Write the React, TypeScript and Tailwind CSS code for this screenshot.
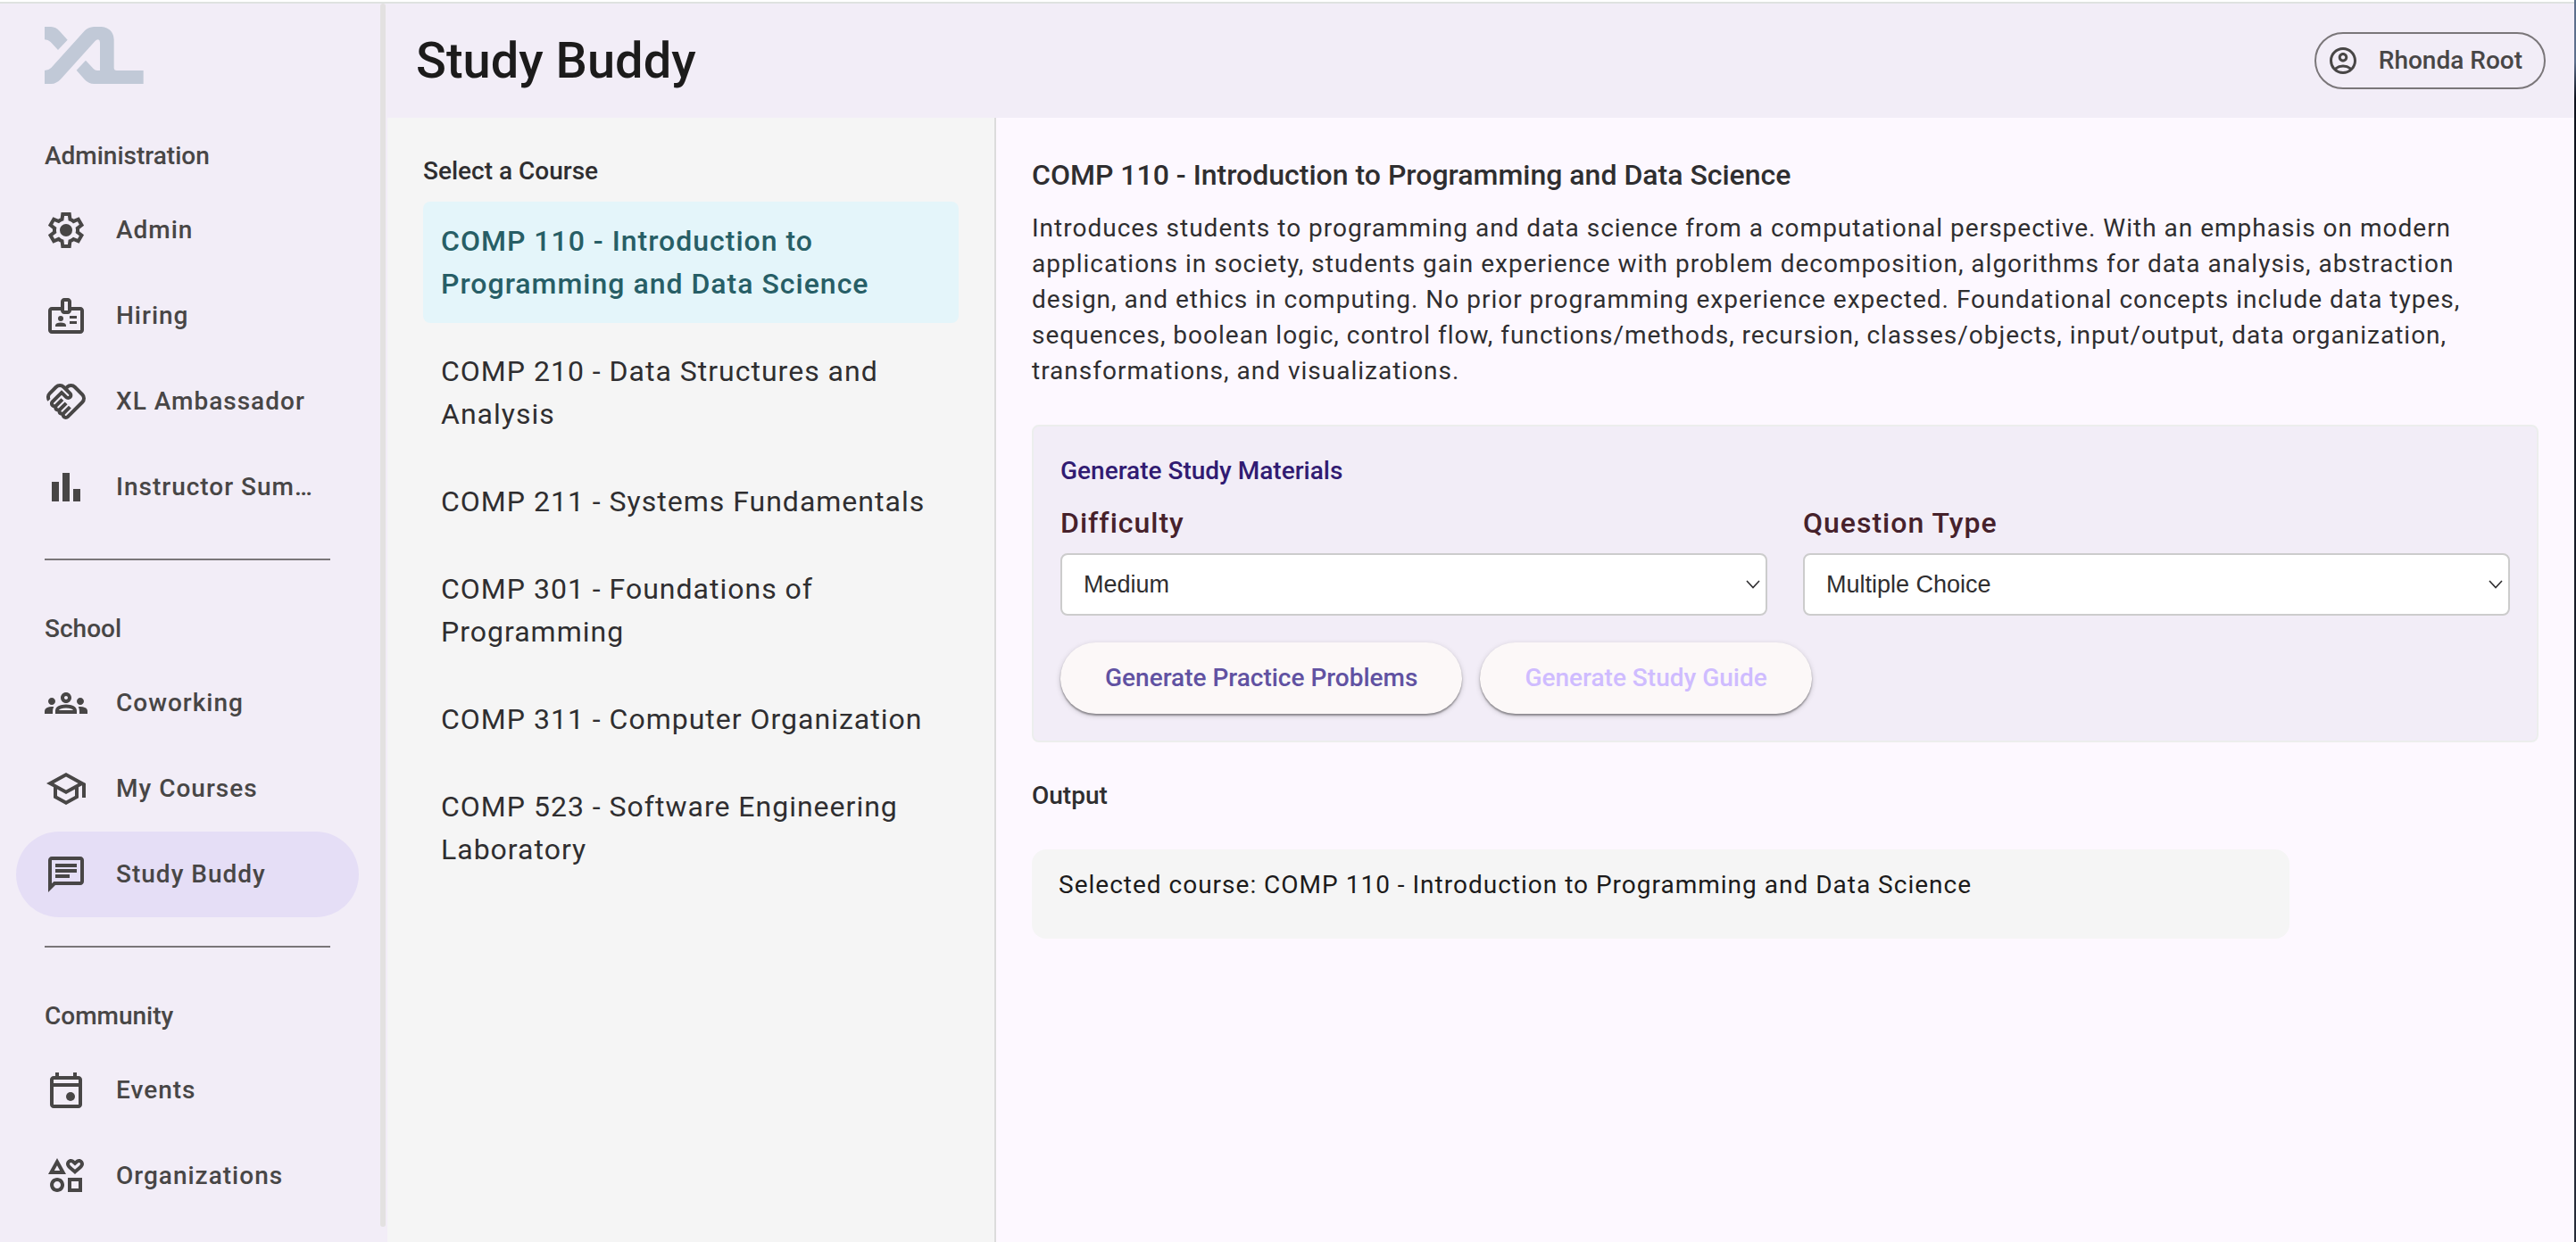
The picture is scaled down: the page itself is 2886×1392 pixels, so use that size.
import { useState, type ComponentType, type ReactNode } from "react";
import {
  MdBarChart,
  MdOutlineAccountCircle,
  MdOutlineBadge,
  MdOutlineChat,
  MdOutlineGroups,
  MdOutlineHandshake,
  MdOutlineInterests,
  MdOutlineSchool,
} from "react-icons/md";

type IconProps = { className?: string };

function Logo() {
  return (
    <svg viewBox="150 90 333 192" className="h-16 w-[111px]" fill="#c1c9d7" role="img" aria-label="XL">
      <path d="M150 90H172Q188 91 200 104L227 134L195 168L170 141Q162 133 150 133Z" />
      <path d="M150 282H172Q190 281 204 266L319 139Q324 133 330 133Q336 134 336 143V237H327Q319 237 314 231L288 203L257 236L284 267Q298 282 316 282H482V237H392Q383 237 383 228V133Q380 94 342 90H315Q297 91 285 103L172 228Q163 237 150 237Z" />
    </svg>
  );
}

function GearIcon({ className }: IconProps) {
  return (
    <svg viewBox="0 0 24 24" fill="currentColor" className={className} aria-hidden="true">
      <path
        fillRule="evenodd"
        d="m9.25 22l-.4-3.2q-.325-.125-.612-.3t-.563-.375L4.7 19.375l-2.75-4.75l2.575-1.95Q4.5 12.5 4.5 12.338v-.675q0-.163.025-.338L1.95 9.375l2.75-4.75l2.975 1.25q.275-.2.575-.375t.6-.3l.4-3.2h5.5l.4 3.2q.325.125.613.3t.562.375l2.975-1.25l2.75 4.75l-2.575 1.95q.025.175.025.338v.674q0 .163-.05.338l2.575 1.95l-2.75 4.75l-2.95-1.25q-.275.2-.575.375t-.6.3l-.4 3.2zM11 20h1.975l.35-2.65q.775-.2 1.438-.587t1.212-.938l2.475 1.025l.975-1.7l-2.15-1.625q.125-.35.175-.737T17.5 12t-.05-.787t-.175-.738l2.15-1.625l-.975-1.7l-2.475 1.05q-.55-.575-1.212-.962t-1.438-.588L13 4h-1.975l-.35 2.65q-.775.2-1.437.588t-1.213.937L5.55 7.15l-.975 1.7l2.15 1.6q-.125.375-.175.75t-.05.8q0 .4.05.775t.175.75l-2.15 1.625l.975 1.7l2.475-1.05q.55.575 1.213.963t1.437.587z"
      />
      <circle cx="12" cy="12" r="3.5" />
    </svg>
  );
}

function CalendarIcon({ className }: IconProps) {
  return (
    <svg viewBox="0 0 24 24" fill="currentColor" className={className} aria-hidden="true">
      <path
        fillRule="evenodd"
        d="M6 2h2v2h8V2h2v2h1q.8 0 1.4.6T21 6v14q0 .8-.6 1.4T19 22H5q-.8 0-1.4-.6T3 20V6q0-.8.6-1.4T5 4h1zM5 6v2h14V6zM5 10v10h14V10z"
      />
      <circle cx="14.5" cy="15.5" r="2.5" />
    </svg>
  );
}

type NavEntry = { label: string; icon: ComponentType<IconProps> };

const sections: { title: string; items: NavEntry[] }[] = [
  {
    title: "Administration",
    items: [
      { label: "Admin", icon: GearIcon },
      { label: "Hiring", icon: MdOutlineBadge },
      { label: "XL Ambassador", icon: MdOutlineHandshake },
      { label: "Instructor Sum…", icon: MdBarChart },
    ],
  },
  {
    title: "School",
    items: [
      { label: "Coworking", icon: MdOutlineGroups },
      { label: "My Courses", icon: MdOutlineSchool },
      { label: "Study Buddy", icon: MdOutlineChat },
    ],
  },
  {
    title: "Community",
    items: [
      { label: "Events", icon: CalendarIcon },
      { label: "Organizations", icon: MdOutlineInterests },
    ],
  },
];

const courses = [
  "COMP 110 - Introduction to Programming and Data Science",
  "COMP 210 - Data Structures and Analysis",
  "COMP 211 - Systems Fundamentals",
  "COMP 301 - Foundations of Programming",
  "COMP 311 - Computer Organization",
  "COMP 523 - Software Engineering Laboratory",
];

function Sidebar() {
  return (
    <aside className="flex w-[434px] shrink-0 bg-[#f2edf7] pr-0.5">
      <nav className="flex-1 pt-[26px] text-[28px] leading-10 font-medium text-[#484646]">
        <div className="mb-9 pl-[50px]">
          <Logo />
        </div>
        {sections.map((section, index) => (
          <section key={section.title} className="pr-6 pl-[18px]">
            {index > 0 && <hr className="mx-8 my-8 border-t-2 border-[#7a7679]" />}
            <h2 className="px-8 pt-[25px] pb-[15px]">{section.title}</h2>
            <ul>
              {section.items.map(({ label, icon: Icon }) => (
                <li key={label}>
                  <a
                    href="#"
                    className={
                      label === "Study Buddy"
                        ? "flex h-24 items-center gap-8 rounded-full bg-[#e5def6] px-8 tracking-[1px]"
                        : "flex h-24 items-center gap-8 rounded-full px-8 tracking-[1px]"
                    }
                  >
                    <Icon className="size-12 shrink-0" />
                    <span className="truncate">{label}</span>
                  </a>
                </li>
              ))}
            </ul>
          </section>
        ))}
      </nav>
      <div className="mb-[17px] w-1.5 rounded-full bg-[#e3e1e1]" />
    </aside>
  );
}

function SelectField({ id, label, options }: { id: string; label: string; options: string[] }) {
  return (
    <div className="flex flex-1 flex-col gap-3">
      <label htmlFor={id} className="text-[32px] leading-[44px] font-medium tracking-[1px] text-[#46212b]">
        {label}
      </label>
      <div className="relative">
        <select
          id={id}
          className="h-[70px] w-full appearance-none rounded-lg border-2 border-[#cccccc] bg-white px-6 font-['Liberation_Sans',sans-serif] text-[27px] text-[#2f2e30]"
        >
          {options.map((option) => (
            <option key={option}>{option}</option>
          ))}
        </select>
        <svg
          viewBox="0 0 16 10"
          fill="none"
          stroke="#2f2e30"
          strokeWidth="1.6"
          className="pointer-events-none absolute top-[30px] right-2 h-2.5 w-4"
          aria-hidden="true"
        >
          <path d="M1 1L8 8.500L15 1" />
        </svg>
      </div>
    </div>
  );
}

function PillButton({ disabled, children }: { disabled?: boolean; children: ReactNode }) {
  return (
    <button
      type="button"
      disabled={disabled}
      className="h-20 rounded-full bg-[#fcf8f8] px-[50px] text-[28px] leading-10 font-medium text-[#6152a2] shadow-[0_2px_2px_rgba(0,0,0,0.35),0_2px_6px_rgba(0,0,0,0.18)] disabled:text-[#cfbcff]"
    >
      {children}
    </button>
  );
}

export default function App() {
  const [selected, setSelected] = useState(courses[0]);

  return (
    <div className="flex min-h-screen font-[Roboto,sans-serif] text-[#2f2e30]">
      <div className="flex min-w-0 flex-1 flex-col border-t-2 border-white">
        <div className="h-0.5 bg-[#dfe2e0]" />
        <div className="flex flex-1">
          <Sidebar />
          <div className="flex min-w-0 flex-1 flex-col">
            <header className="flex h-32 items-center justify-between bg-[#f2edf7] px-8">
              <h1 className="text-[56px] leading-[64px] font-medium text-[#1c1b1b]">Study Buddy</h1>
              <button
                type="button"
                className="flex h-16 items-center gap-[22px] rounded-full border-2 border-[#7a7679] pr-6 pl-3 text-[28px] font-medium text-[#484646]"
              >
                <MdOutlineAccountCircle className="size-9" />
                Rhonda Root
              </button>
            </header>
            <div className="flex flex-1">
              <section className="w-[682px] shrink-0 border-r-2 border-[#dcdcdc] bg-[#f5f5f5] p-10">
                <h2 className="text-[28px] leading-10 font-medium">Select a Course</h2>
                <ul className="mt-3.5 flex flex-col gap-2.5">
                  {courses.map((course) => (
                    <li key={course}>
                      <button
                        type="button"
                        onClick={() => setSelected(course)}
                        className={
                          course === selected
                            ? "w-full rounded-lg bg-[#e4f5fa] p-5 text-left text-[32px] leading-[48px] font-medium tracking-[1px] text-[#275e66]"
                            : "w-full rounded-lg p-5 text-left text-[32px] leading-[48px] tracking-[1px]"
                        }
                      >
                        {course}
                      </button>
                    </li>
                  ))}
                </ul>
              </section>
              <main className="min-w-0 flex-1 bg-[#fdf8ff] p-10">
                <h2 className="text-[32px] leading-[48px] font-medium">{selected}</h2>
                <p className="mt-4 max-w-[1620px] text-[28px] leading-10 tracking-[1px]">
                  Introduces students to programming and data science from a computational perspective. With an
                  emphasis on modern applications in society, students gain experience with problem decomposition,
                  algorithms for data analysis, abstraction design, and ethics in computing. No prior programming
                  experience expected. Foundational concepts include data types, sequences, boolean logic, control
                  flow, functions/methods, recursion, classes/objects, input/output, data organization,
                  transformations, and visualizations.
                </p>
                <section className="mt-10 rounded-lg border-2 border-[#eceeed] bg-[#f2edf7] p-[30px]">
                  <h3 className="text-[28px] leading-10 font-medium text-[#311b72]">Generate Study Materials</h3>
                  <div className="mt-4 flex gap-10">
                    <SelectField id="difficulty" label="Difficulty" options={["Medium", "Easy", "Hard"]} />
                    <SelectField id="question-type" label="Question Type" options={["Multiple Choice", "Short Answer"]} />
                  </div>
                  <div className="mt-[30px] flex gap-5">
                    <PillButton>Generate Practice Problems</PillButton>
                    <PillButton disabled>Generate Study Guide</PillButton>
                  </div>
                </section>
                <h3 className="mt-10 text-[28px] leading-10 font-medium">Output</h3>
                <div className="mt-10 max-w-[1409px] rounded-2xl bg-[#f5f5f5] px-[30px] pt-5 pb-10 text-[28px] leading-10 tracking-[1px] text-[#1c1b1b]">
                  Selected course: {selected}
                </div>
              </main>
            </div>
          </div>
        </div>
      </div>
      <div className="w-0.5 bg-linear-to-b from-[#5d6f8c] from-5% via-[#0d111b] via-8% to-[#262b38]" />
    </div>
  );
}
